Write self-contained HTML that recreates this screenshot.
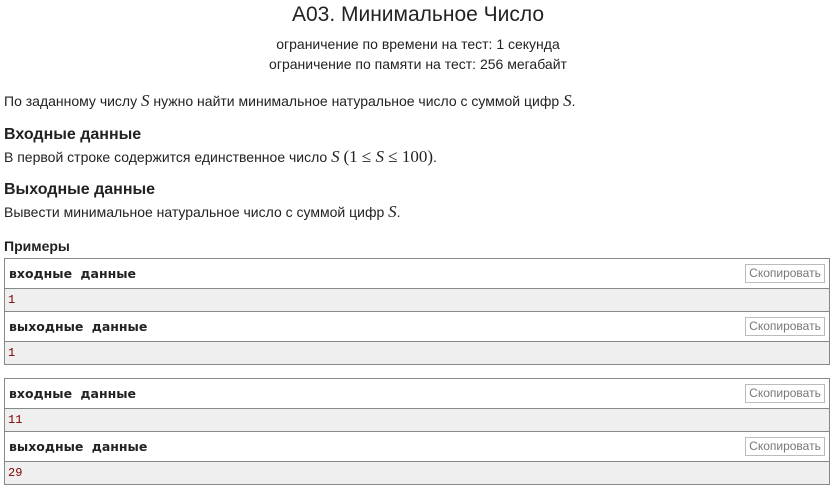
<!DOCTYPE html><html><head><meta charset="utf-8"><style>
body{margin:0;width:836px;height:492px;background:#fff;font-family:"Liberation Sans",Arial,sans-serif;color:#222;position:relative;overflow:hidden}
.a{position:absolute;white-space:nowrap}
.c{left:0;width:836px;text-align:center}
.m{font-family:"Liberation Serif",serif;font-style:italic;font-size:17px}
.r{font-family:"Liberation Serif",serif;font-size:17px}
h3{margin:0;font-size:16px;font-weight:bold}
.box{position:absolute;left:4px;width:824px;border:1px solid #888;}
.hd{height:29px;border-bottom:1px solid #888;position:relative;font-family:"DejaVu Sans",sans-serif;font-weight:bold;font-size:12.5px;line-height:30px;padding-left:4px;word-spacing:4px}
.in{height:22px;background:#efefef;border-bottom:1px solid #888;font-family:"Liberation Mono",monospace;font-size:12px;color:#800000;line-height:22px;padding-left:3px}
.in:last-child{border-bottom:none}
.cp{position:absolute;right:4px;top:5px;height:17px;width:78px;border:1px solid #bbb;font-family:"Liberation Sans",sans-serif;font-weight:normal;font-size:12px;color:#777;line-height:17px;text-align:center;word-spacing:0}
</style></head><body>
<div class="a c" style="top:3px;font-size:21px">A03. Минимальное Число</div>
<div class="a c" style="top:36px;font-size:14px">ограничение по времени на тест: 1 секунда</div>
<div class="a c" style="top:56px;font-size:14px">ограничение по памяти на тест: 256 мегабайт</div>
<div class="a" style="left:4px;top:91px;font-size:14px">По заданному числу <span class="m">S</span> нужно найти минимальное натуральное число с суммой цифр <span class="m">S</span>.</div>
<div class="a" style="left:4px;top:126px"><h3>Входные данные</h3></div>
<div class="a" style="left:4px;top:147px;font-size:14px">В первой строке содержится единственное число <span class="m">S</span> <span class="r">(1 ≤ <i>S</i> ≤ 100)</span>.</div>
<div class="a" style="left:4px;top:181px"><h3>Выходные данные</h3></div>
<div class="a" style="left:4px;top:202px;font-size:14px">Вывести минимальное натуральное число с суммой цифр <span class="m">S</span>.</div>
<div class="a" style="left:4px;top:238px;font-size:14px;font-weight:bold">Примеры</div>
<div class="box" style="top:258px">
<div class="hd">входные данные<div class="cp">Скопировать</div></div>
<div class="in">1</div>
<div class="hd">выходные данные<div class="cp">Скопировать</div></div>
<div class="in">1</div>
</div>
<div class="box" style="top:378px">
<div class="hd">входные данные<div class="cp">Скопировать</div></div>
<div class="in">11</div>
<div class="hd">выходные данные<div class="cp">Скопировать</div></div>
<div class="in">29</div>
</div>
</body></html>
